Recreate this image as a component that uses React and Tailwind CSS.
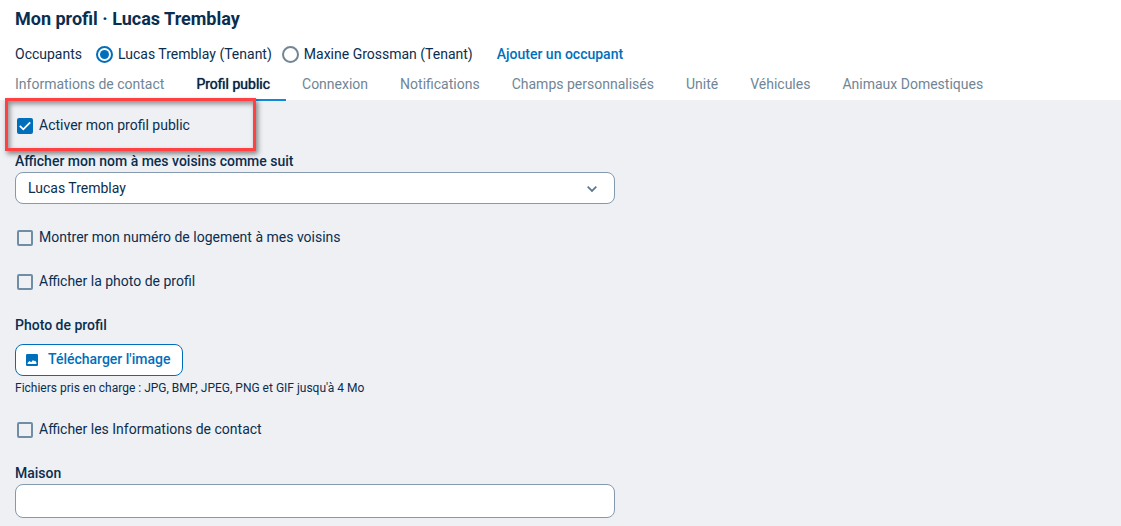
import React from "react";

const tabs = [
  "Informations de contact",
  "Profil public",
  "Connexion",
  "Notifications",
  "Champs personnalisés",
  "Unité",
  "Véhicules",
  "Animaux Domestiques",
];

function Radio({ label, defaultChecked }) {
  return (
    <label className="flex items-center gap-[5px]">
      <span className="mt-px grid size-[17px]">
        <input
          type="radio"
          name="occupant"
          defaultChecked={defaultChecked}
          className="peer col-start-1 row-start-1 m-0 size-[17px] appearance-none rounded-full border-2 border-[#708696] bg-white checked:border-[#006fbb]"
        />
        <span className="pointer-events-none col-start-1 row-start-1 hidden size-[9px] place-self-center rounded-full bg-[#006fbb] peer-checked:block" />
      </span>
      {label}
    </label>
  );
}

function Checkbox({ label, defaultChecked }) {
  return (
    <label className="flex w-fit items-center gap-1.5 pl-0.5">
      <span className="mt-px grid size-4">
        <input
          type="checkbox"
          defaultChecked={defaultChecked}
          className="peer col-start-1 row-start-1 m-0 size-4 appearance-none rounded-xs border-2 border-[#708da6] checked:border-[#006fbb] checked:bg-[#006fbb]"
        />
        <svg
          viewBox="0 0 16 16"
          className="pointer-events-none col-start-1 row-start-1 hidden size-4 peer-checked:block"
          fill="none"
          stroke="white"
          strokeWidth="1.8"
        >
          <path d="M2.8 7.8 6.3 11.3 13.2 4.4" />
        </svg>
      </span>
      {label}
    </label>
  );
}

export default function App() {
  return (
    <div className="flex min-h-screen flex-col bg-[#eff0f4] font-[Roboto,sans-serif] text-sm leading-5 text-[#0a2e4f]">
      <header className="bg-white px-[15px] pt-[7px]">
        <h1 className="text-lg leading-6 font-bold">Mon profil · Lucas Tremblay</h1>
        <div className="mt-[13px] flex items-center">
          <span className="mr-[14px]">Occupants</span>
          <div className="flex gap-2.5">
            <Radio label="Lucas Tremblay (Tenant)" defaultChecked />
            <Radio label="Maxine Grossman (Tenant)" />
          </div>
          <a href="#ajouter" className="ml-6 font-medium text-[#006fbb]">
            Ajouter un occupant
          </a>
        </div>
        <nav className="-mx-4 mt-2.5 -mb-px flex">
          {tabs.map((tab) => (
            <a
              key={tab}
              href="#"
              aria-current={tab === "Profil public" ? "page" : undefined}
              className={
                tab === "Profil public"
                  ? "border-b-2 border-[#1089dc] px-4 pb-[5px] text-[#0a2340] [text-shadow:0_0_1px_#0a2340]"
                  : "px-4 pb-[7px] text-[#708696]"
              }
            >
              {tab}
            </a>
          ))}
        </nav>
      </header>

      <main className="flex-1 px-[15px] pt-[15px] pb-2">
        <div className="relative">
          <Checkbox label="Activer mon profil public" defaultChecked />
          <div className="pointer-events-none absolute -top-[17px] -left-2.5 h-[53px] w-[251px] border-3 border-[#ff4144] shadow-[2px_3px_5px_rgba(0,0,0,0.45),inset_2px_3px_5px_rgba(0,0,0,0.4)]" />
        </div>

        <label htmlFor="nom" className="mt-4 block w-fit font-medium">
          Afficher mon nom à mes voisins comme suit
        </label>
        <div className="mt-px grid max-w-[600px]">
          <select
            id="nom"
            className="col-start-1 row-start-1 h-8 w-full appearance-none rounded-lg border border-[#8499ae] bg-white px-3"
          >
            <option>Lucas Tremblay</option>
          </select>
          <svg
            viewBox="0 0 10 6"
            className="pointer-events-none col-start-1 row-start-1 mt-px mr-[18px] h-1.5 w-2.5 self-center justify-self-end"
            fill="none"
            stroke="#5f788c"
            strokeWidth="1.8"
          >
            <path d="M0.7 0.7 5 5 9.3 0.7" />
          </svg>
        </div>

        <div className="mt-[23px] flex flex-col gap-6">
          <Checkbox label="Montrer mon numéro de logement à mes voisins" />
          <Checkbox label="Afficher la photo de profil" />
        </div>

        <h2 className="mt-6 font-medium">Photo de profil</h2>
        <button
          type="button"
          className="mt-[9px] flex h-8 items-center gap-2.5 rounded-lg border border-[#006fbb] bg-white pr-3 pb-0.5 pl-2.5 font-medium text-[#006fbb]"
        >
          <svg viewBox="0 0 12 12" className="mt-0.5 size-3" fill="none">
            <rect width="12" height="12" rx="1.2" fill="#006fbb" />
            <path d="M1.6 10V8.8L3.6 6.9 5.2 8.2 7 6 8.2 7.3 9 6.6 10.4 8.6V10Z" fill="white" />
          </svg>
          Télécharger l'image
        </button>
        <p className="mt-1 text-xs leading-4">
          Fichiers pris en charge : JPG, BMP, JPEG, PNG et GIF jusqu'à 4 Mo
        </p>

        <div className="mt-[23px]">
          <Checkbox label="Afficher les Informations de contact" />
        </div>

        <label htmlFor="maison" className="mt-6 block w-fit font-medium">
          Maison
        </label>
        <input
          id="maison"
          type="text"
          className="mt-px block h-[34px] w-full max-w-[600px] rounded-lg border border-[#8499ae] bg-white px-3"
        />
      </main>
    </div>
  );
}
